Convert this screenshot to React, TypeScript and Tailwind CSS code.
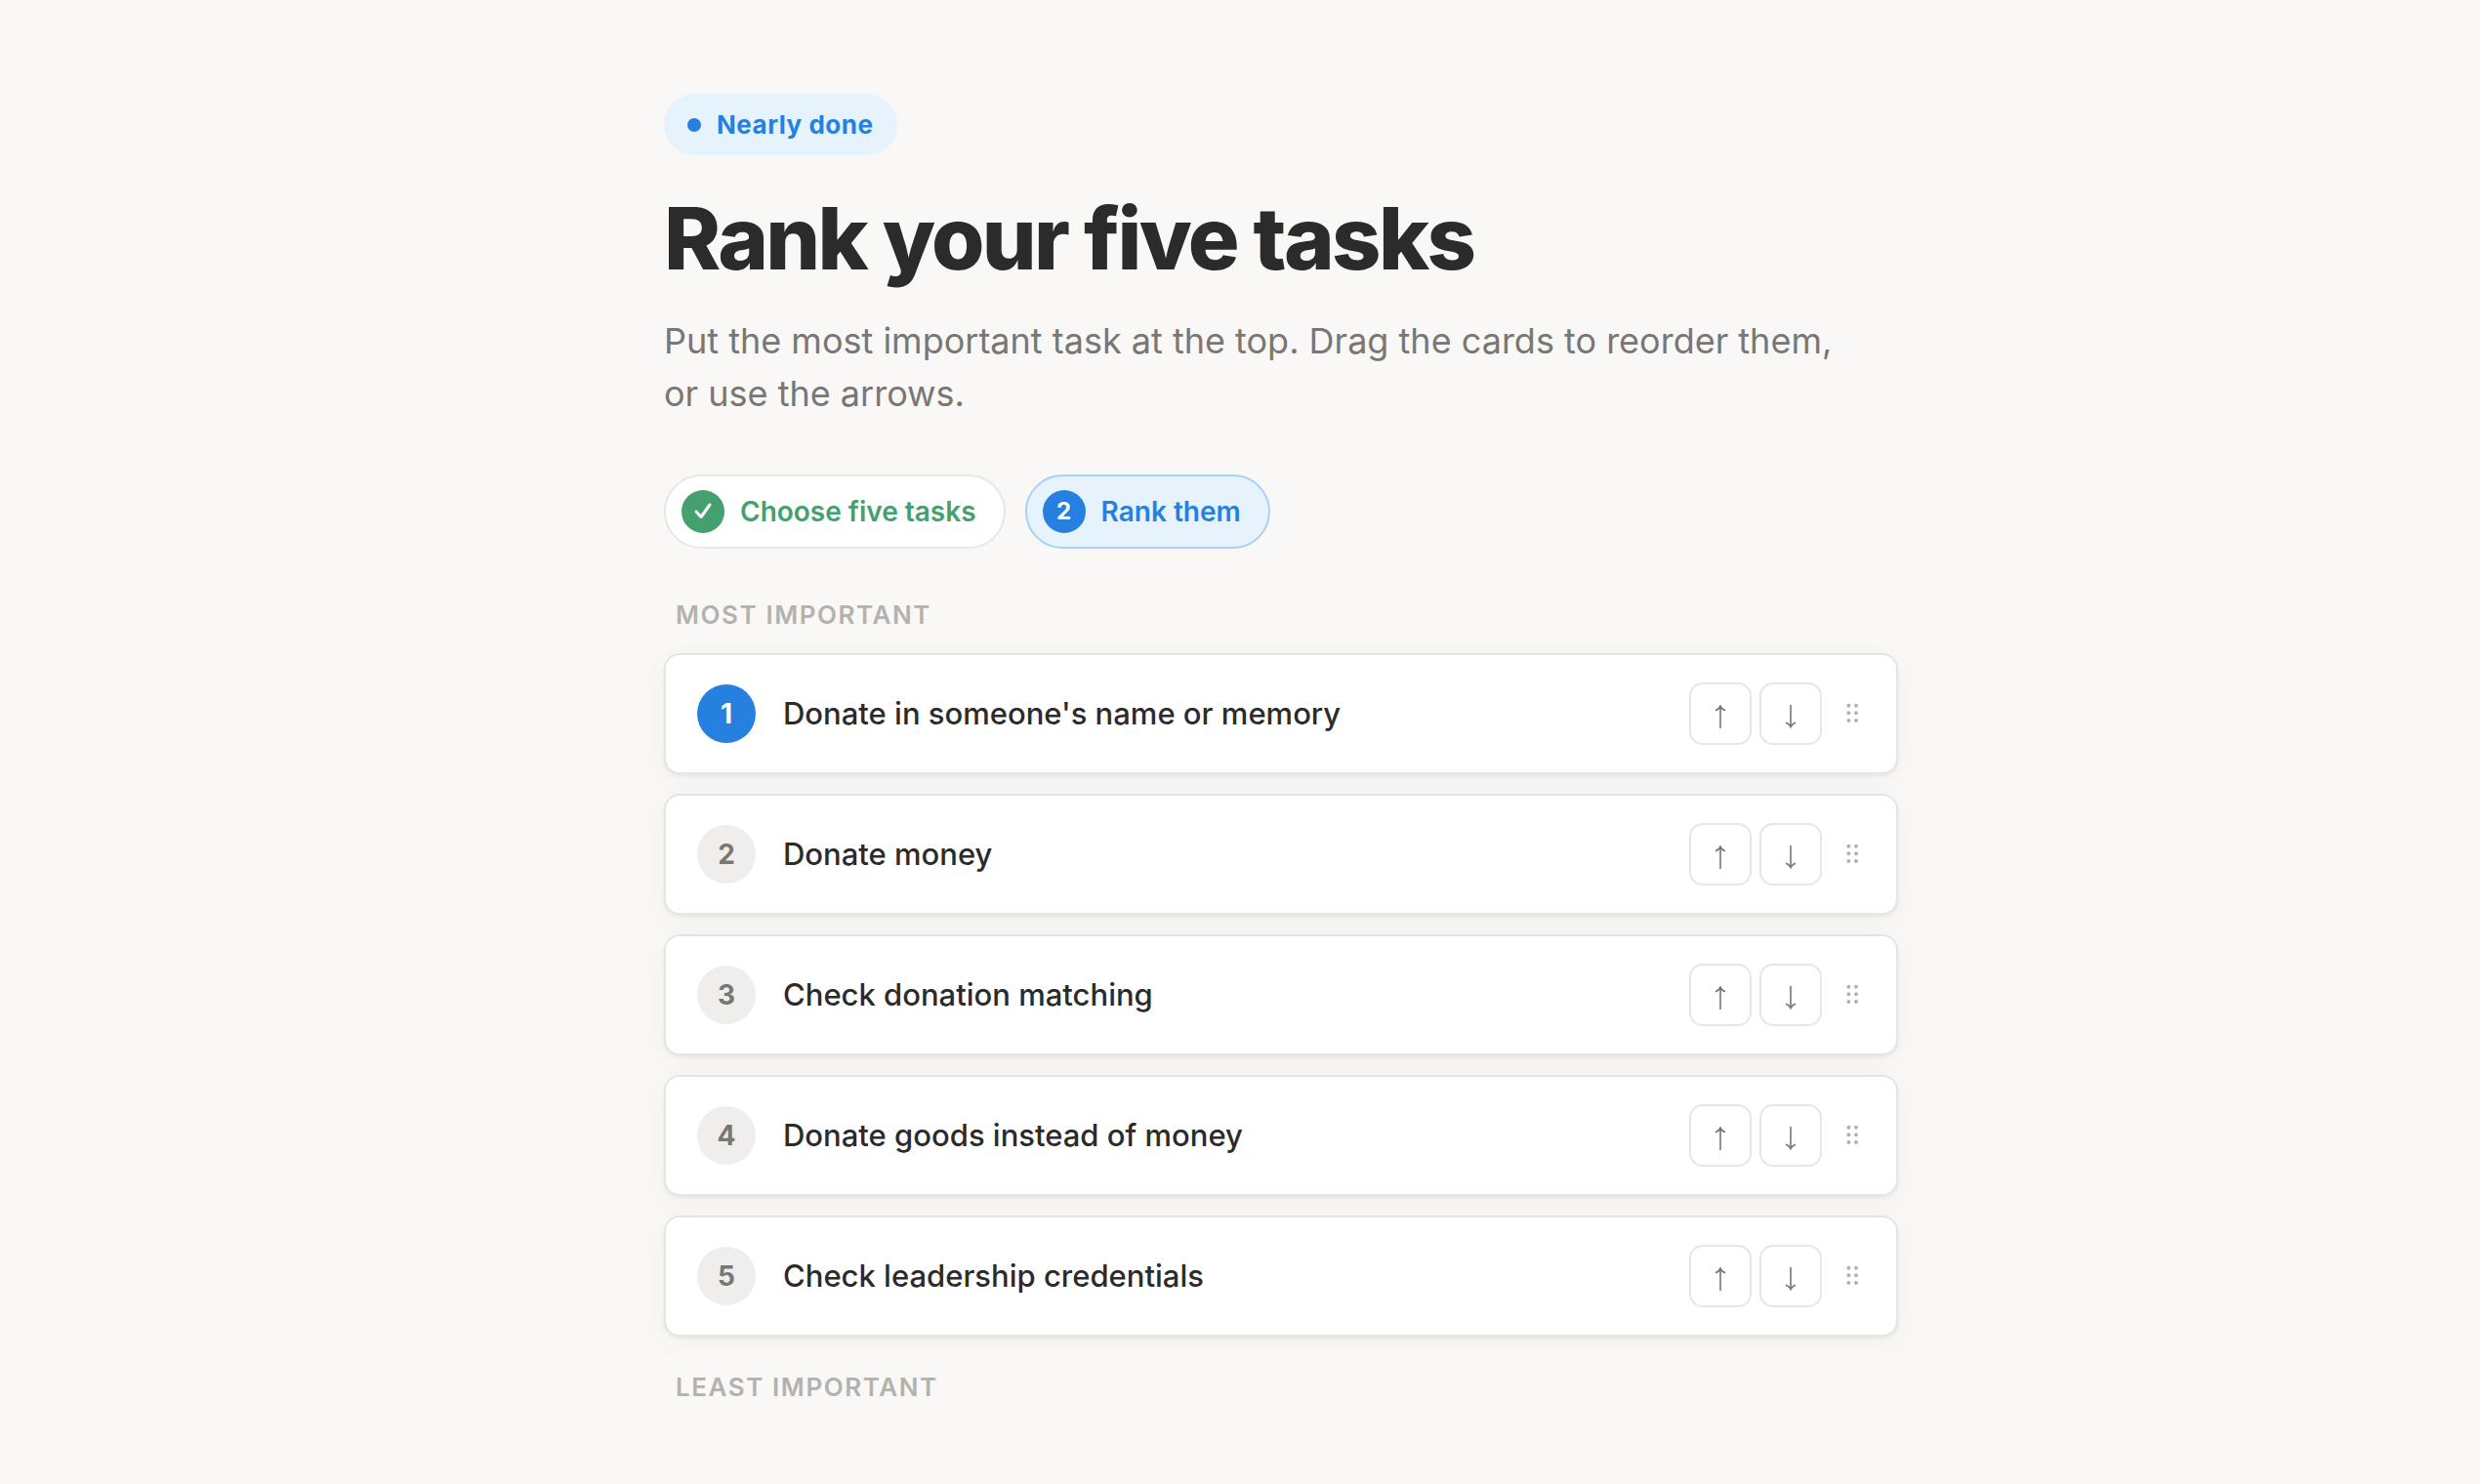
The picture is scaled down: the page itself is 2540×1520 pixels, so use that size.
import { useState } from 'react';
import { clsx } from 'clsx';

interface Task {
    id: string;
    title: string;
}

const initialTasks: Task[] = [
    { id: 'memory', title: "Donate in someone's name or memory" },
    { id: 'money', title: 'Donate money' },
    { id: 'matching', title: 'Check donation matching' },
    { id: 'goods', title: 'Donate goods instead of money' },
    { id: 'credentials', title: 'Check leadership credentials' },
];

function CheckIcon() {
    return (
        <svg width="20" height="20" viewBox="0 0 20 20" fill="none" aria-hidden="true">
            <path d="M3 10 L8 15.5 L17 3" stroke="currentColor" strokeWidth="3" strokeLinecap="round" strokeLinejoin="round" />
        </svg>
    );
}

function ArrowIcon({ down = false }: { down?: boolean }) {
    return (
        <svg width="12" height="26" viewBox="0 0 12 26" fill="currentColor" className={clsx(down && 'rotate-180')} aria-hidden="true">
            <path d="M6 .5 Q7.6 4.6 11.3 6 L10.8 7.5 Q8.2 6.6 6.8 5 V25 H5.2 V5 Q3.8 6.6 1.2 7.5 L.7 6 Q4.4 4.6 6 .5 Z" />
        </svg>
    );
}

function GripIcon() {
    return (
        <svg width="24" height="24" viewBox="0 0 24 24" fill="currentColor" aria-hidden="true">
            {[3.7, 11.3, 19].map((y) => (
                <g key={y}>
                    <circle cx="7.4" cy={y} r="2" />
                    <circle cx="15" cy={y} r="2" />
                </g>
            ))}
        </svg>
    );
}

interface TaskCardProps {
    task: Task;
    rank: number;
    onMove: (step: number) => void;
    onDragStart: () => void;
    onDrop: () => void;
}

function TaskCard({ task, rank, onMove, onDragStart, onDrop }: TaskCardProps) {
    const arrowButton = 'flex size-16 items-center justify-center rounded-[14px] border-2 border-[#e8e7e5] bg-white pt-1.5 text-[#787774]';

    return (
        <li
            draggable
            onDragStart={onDragStart}
            onDragOver={(e) => e.preventDefault()}
            onDrop={onDrop}
            className="flex cursor-grab items-center rounded-2xl border-2 border-[#e6e5e3] bg-white px-8 py-7 shadow-[0_2px_4px_rgba(0,0,0,0.06),0_8px_32px_rgba(0,0,0,0.03)]"
        >
            <span
                className={clsx(
                    'flex size-15 shrink-0 items-center justify-center rounded-full text-[28px] leading-none font-bold',
                    rank === 1 ? 'bg-[#2680e0] text-white' : 'bg-[#efeeec] text-[#787774]'
                )}
            >
                {rank}
            </span>
            <span className="ml-7 flex-1 text-[31px] leading-[44px] font-medium">{task.title}</span>
            <div className="flex gap-2">
                <button type="button" aria-label={`Move ${task.title} up`} onClick={() => onMove(-1)} className={arrowButton}>
                    <ArrowIcon />
                </button>
                <button type="button" aria-label={`Move ${task.title} down`} onClick={() => onMove(1)} className={arrowButton}>
                    <ArrowIcon down />
                </button>
            </div>
            <span className="ml-5 text-[#b3b2ae]">
                <GripIcon />
            </span>
        </li>
    );
}

export default function App() {
    const [tasks, setTasks] = useState<Task[]>(initialTasks);
    const [dragged, setDragged] = useState<number | null>(null);

    const moveTask = (from: number, to: number) => {
        if (to < 0 || to >= tasks.length) return;
        const next = [...tasks];
        const [task] = next.splice(from, 1);
        next.splice(to, 0, task);
        setTasks(next);
    };

    const handleDrop = (index: number) => {
        if (dragged !== null) moveTask(dragged, index);
        setDragged(null);
    };

    const edgeLabel = 'px-3 text-[26px] leading-8 font-semibold tracking-[0.06em] text-[#b3b2ae] uppercase';

    return (
        <div className="min-h-screen bg-[#f9f8f6] py-24 pl-[84px] font-['Inter',sans-serif] text-[#2b2b2b]">
            <main className="mx-auto max-w-[1264px]">
                <p className="flex h-[63px] w-fit items-center gap-4 rounded-full bg-[#e6f2fc] px-6 text-[26px] leading-8 font-bold tracking-[0.02em] text-[#2680e0]">
                    <span className="size-3.5 rounded-full bg-[#2680e0]" />
                    Nearly done
                </p>

                <h1 className="mt-9 text-[88px] leading-[98px] font-extrabold tracking-[-0.03em]">Rank your five tasks</h1>
                <p className="mt-[29px] max-w-[1200px] text-4xl leading-[54px] text-[#787774]">
                    Put the most important task at the top. Drag the cards to reorder them, or use the arrows.
                </p>

                <ol className="mt-14 flex gap-5 text-[28px] leading-10 font-semibold">
                    <li className="flex items-center gap-4 rounded-full border-2 border-[#e8e7e5] bg-white py-3.5 pr-7 pl-4 text-[#45a06f]">
                        <span className="flex size-11 items-center justify-center rounded-full bg-[#45a06f] text-white">
                            <CheckIcon />
                        </span>
                        Choose five tasks
                    </li>
                    <li aria-current="step" className="flex items-center gap-4 rounded-full border-2 border-[#a9d0f7] bg-[#e6f2fc] py-3.5 pr-7 pl-4 text-[#2680e0]">
                        <span className="flex size-11 items-center justify-center rounded-full bg-[#2680e0] text-2xl font-bold text-white">2</span>
                        Rank them
                    </li>
                </ol>

                <p className={clsx(edgeLabel, 'mt-13')}>Most important</p>
                <ol className="mt-[23px] mb-9 flex flex-col gap-5">
                    {tasks.map((task, index) => (
                        <TaskCard
                            key={task.id}
                            task={task}
                            rank={index + 1}
                            onMove={(step) => moveTask(index, index + step)}
                            onDragStart={() => setDragged(index)}
                            onDrop={() => handleDrop(index)}
                        />
                    ))}
                </ol>
                <p className={edgeLabel}>Least important</p>
            </main>
        </div>
    );
}
